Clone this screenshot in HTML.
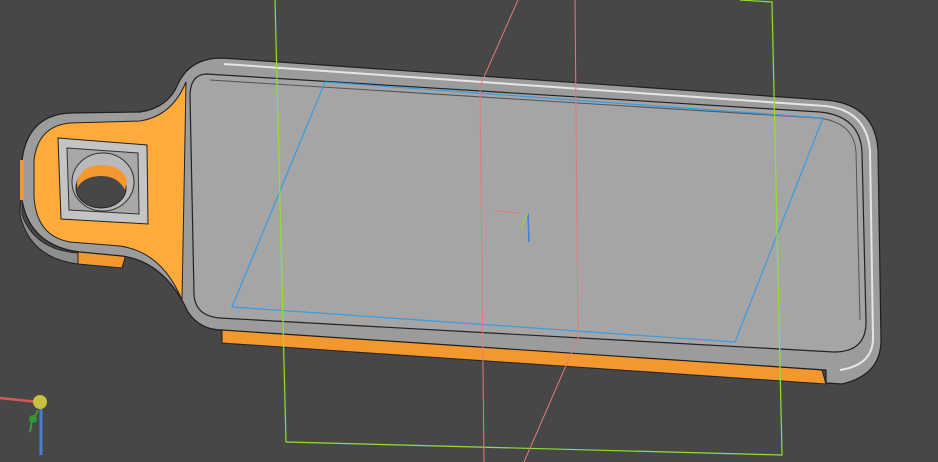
<!DOCTYPE html>
<html><head><style>
html,body{margin:0;padding:0;background:#474747;}
svg{display:block}
</style></head><body>
<svg width="938" height="462" viewBox="0 0 938 462" xmlns="http://www.w3.org/2000/svg">
<rect width="938" height="462" fill="#474747"/>
<!-- bottom orange side band -->
<path d="M222,328 L822,370 L826,384 L222,343 Z" fill="#f3982f" stroke="#222" stroke-width="1"/>
<path d="M78,250 L126,254 L122,268 L78,264 Z" fill="#f3982f" stroke="#222" stroke-width="1"/>
<!-- outer body -->
<path d="M222,58 L825,100 Q875,104 878,150 L881,340 Q881,375 842,384 L826,383 L826,370 L222,330 Q200,330 188,312 Q165,262 122,256 L80,252 Q30,246 22,200 L22,160 Q28,115 70,113 L140,112 Q168,108 178,84 Q190,58 222,58 Z" fill="#9c9c9c" stroke="#1e1e1e" stroke-width="1.2"/>
<path d="M22,165 L22,215 Q35,250 78,253 L78,264 Q30,258 20,215 Z" fill="#8e8e8e" stroke="#222"/>
<path d="M224,64 L825,106 Q866,110 870,150 L873,338 Q873,365 840,370" fill="none" stroke="#e6e6e6" stroke-width="2"/>
<path d="M22,160 L22,200" stroke="#f3982f" stroke-width="4"/>
<!-- orange tab top -->
<path d="M186,82 L182,300 Q162,252 120,246 L70,242 Q36,236 34,196 L34,160 Q38,126 70,123 L140,121 Q172,116 186,82 Z" fill="#ffab3c" stroke="#222" stroke-width="1"/>
<!-- inner floor -->
<path d="M206,74 L820,112 Q860,116 862,152 L866,322 Q866,352 834,352 L220,318 Q195,316 194,294 L190,96 Q190,75 206,74 Z" fill="#a5a5a5" stroke="#222" stroke-width="1.2"/>
<path d="M210,80 L818,118 Q854,122 856,152 L860,320" fill="none" stroke="#555" stroke-width="1"/>
<!-- square pocket -->
<path d="M58,138 L147,145 L148,224 L61,219 Z" fill="#c4c4c4" stroke="#222"/>
<path d="M67,148 L138,153 L139,214 L69,210 Z" fill="#a8a8a8" stroke="#333"/>
<ellipse cx="103" cy="182" rx="31" ry="29" fill="#b9b9b9" stroke="#333"/>
<ellipse cx="101" cy="188" rx="25" ry="20" fill="#474747" stroke="#222"/>
<path d="M77,182 Q82,164 104,165 Q122,166 127,180 L125,190 Q118,176 101,176 Q84,176 77,188 Z" fill="#f3982f"/>
<!-- blue sketch -->
<path d="M325,82 L823,118 L735,342 L232,307 Z" fill="none" stroke="#3a9be0" stroke-width="1.2"/>
<!-- green plane -->
<path d="M275,0 L286,442 L782,455 L772,2 L740,0" fill="none" stroke="#8fe034" stroke-width="1.2"/>
<!-- pink plane -->
<path d="M518,0 L480,86 L484,462" fill="none" stroke="#e07a7a" stroke-width="1"/>
<path d="M575,0 L578,338 L524,462" fill="none" stroke="#e07a7a" stroke-width="1"/>
<!-- origin -->
<path d="M496,211 L520,213" stroke="#e07a7a" stroke-width="1"/>
<path d="M528,213 L529,242" stroke="#3a7ee0" stroke-width="1.5"/>
<path d="M528,213 L521,228" stroke="#8fe034" stroke-width="1"/>
<!-- axis triad -->
<path d="M0,398 L38,402" stroke="#d85858" stroke-width="2.5"/>
<path d="M41,404 L41,455" stroke="#4a7fd0" stroke-width="3"/>
<path d="M38,410 L32,422 L30,432" stroke="#3a9a3a" stroke-width="2"/>
<circle cx="33" cy="419" r="4" fill="#2f9a2f"/>
<circle cx="40" cy="402" r="7" fill="#c8c040"/>
</svg>
</body></html>
